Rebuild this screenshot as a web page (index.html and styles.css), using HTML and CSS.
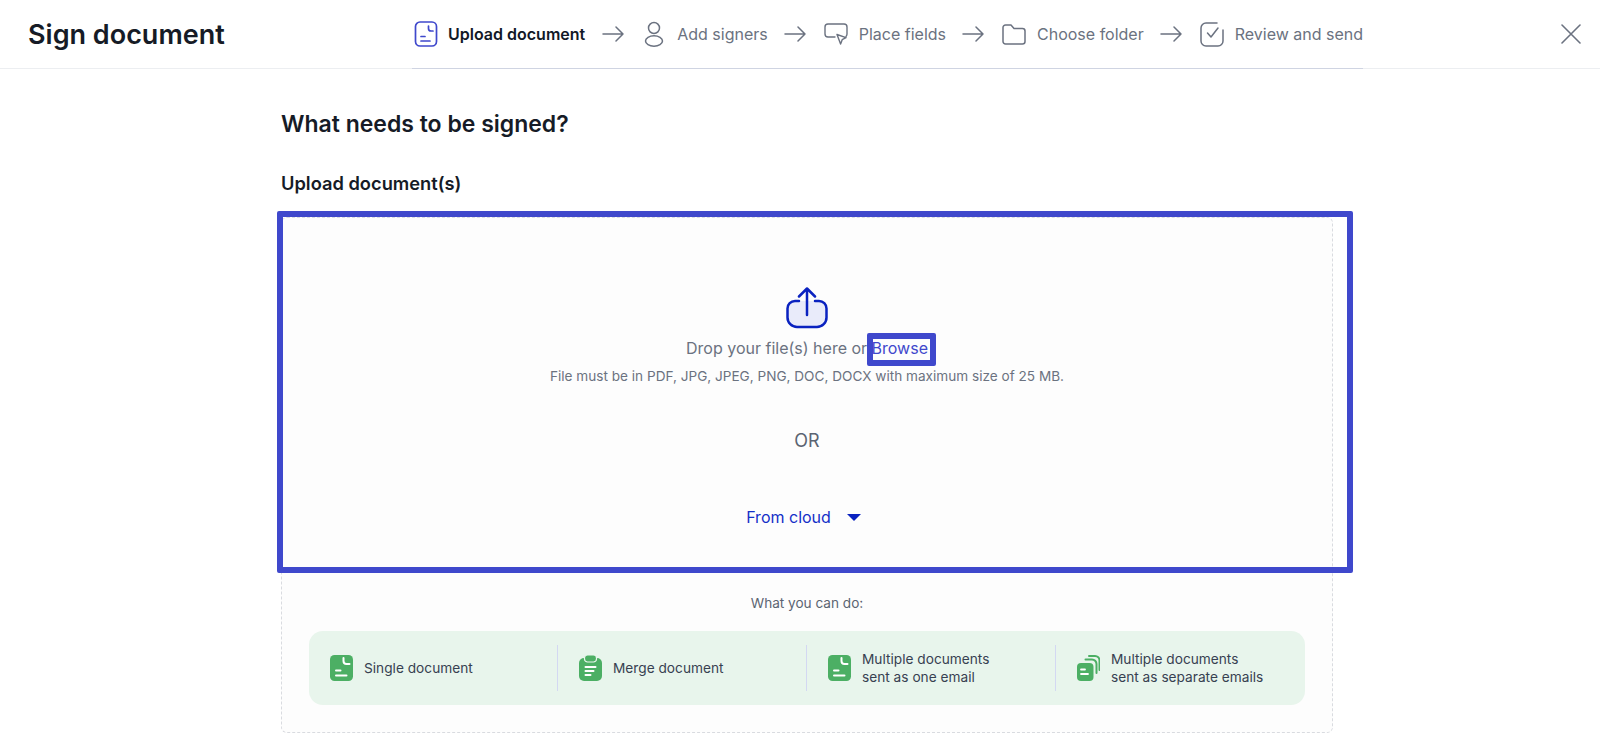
FILE: index.html
```html
<!DOCTYPE html>
<html lang="en">
<head>
  <meta charset="UTF-8" />
  <meta name="viewport" content="width=device-width, initial-scale=1.0" />
  <title>Sign document</title>
  <link rel="stylesheet" href="styles.css">
</head>
<body>

  <header class="topbar">
    <h1 class="page-title">Sign document</h1>
    <nav class="steps">
      <div class="step active">
        <svg class="step-icon" viewBox="0 0 24 28" fill="none" stroke="#3f48cc" stroke-width="1.7" stroke-linecap="round" stroke-linejoin="round">
          <rect x="1.5" y="2" width="21" height="24" rx="4.5" />
          <path d="M14.5 6v2.5a2.5 2.5 0 0 0 2.5 2.5h2" />
          <path d="M7 16.5h4M7 21h9" />
        </svg>
        <span>Upload document</span>
      </div>
      <svg class="arrow" viewBox="0 0 22 16" fill="none" stroke="#6b7280" stroke-width="1.5" stroke-linecap="round" stroke-linejoin="round"><path d="M1 8h20M14 1l7 7-7 7" /></svg>
      <div class="step">
        <svg class="step-icon" viewBox="0 0 24 28" fill="none" stroke="#6b7280" stroke-width="1.5">
          <circle cx="12" cy="8" r="5.5" />
          <ellipse cx="12" cy="21" rx="8.5" ry="5.2" />
        </svg>
        <span>Add signers</span>
      </div>
      <svg class="arrow" viewBox="0 0 22 16" fill="none" stroke="#6b7280" stroke-width="1.5" stroke-linecap="round" stroke-linejoin="round"><path d="M1 8h20M14 1l7 7-7 7" /></svg>
      <div class="step">
        <svg class="step-icon" viewBox="0 0 24 28" fill="none" stroke="#6b7280" stroke-width="1.4" stroke-linecap="round" stroke-linejoin="round">
          <path d="M11 17H4a3 3 0 0 1-3-3V7a3 3 0 0 1 3-3h16a3 3 0 0 1 3 3v7c0 1-.4 1.8-1 2.4" />
          <path d="M13 14.5l9 3.2-3.8 2-1.6 4.3z" />
        </svg>
        <span>Place fields</span>
      </div>
      <svg class="arrow" viewBox="0 0 22 16" fill="none" stroke="#6b7280" stroke-width="1.5" stroke-linecap="round" stroke-linejoin="round"><path d="M1 8h20M14 1l7 7-7 7" /></svg>
      <div class="step">
        <svg class="step-icon" viewBox="0 0 24 28" fill="none" stroke="#6b7280" stroke-width="1.5" stroke-linejoin="round">
          <path d="M1 7.5A2.5 2.5 0 0 1 3.500 5H9l3 3.500h8.500A2.500 2.500 0 0 1 23 11v10.500a2.500 2.500 0 0 1-2.500 2.500h-17A2.500 2.500 0 0 1 1 21.500z" />
        </svg>
        <span>Choose folder</span>
      </div>
      <svg class="arrow" viewBox="0 0 22 16" fill="none" stroke="#6b7280" stroke-width="1.5" stroke-linecap="round" stroke-linejoin="round"><path d="M1 8h20M14 1l7 7-7 7" /></svg>
      <div class="step">
        <svg class="step-icon" viewBox="0 0 24 28" fill="none" stroke="#6b7280" stroke-width="1.5" stroke-linecap="round" stroke-linejoin="round">
          <path d="M17 3H6a5 5 0 0 0-5 5v13a5 5 0 0 0 5 5h12a5 5 0 0 0 5-5V10" />
          <path d="M7.500 13l3.500 4 7-9" />
        </svg>
        <span>Review and send</span>
      </div>
    </nav>
    <button class="close-btn" aria-label="Close">
      <svg viewBox="0 0 20 20" fill="none" stroke="#6b7280" stroke-width="1.6" stroke-linecap="round"><path d="M1 1l18 18M19 1L1 19" /></svg>
    </button>
  </header>

  <main class="content">
    <h2 class="section-title">What needs to be signed?</h2>
    <h3 class="upload-label">Upload document(s)</h3>

    <section class="upload-panel">
      <div class="highlight-box"></div>

      <div class="dropzone">
        <svg class="upload-icon" viewBox="0 0 42 42" fill="none" stroke="#0a22c0" stroke-width="2.500" stroke-linecap="round" stroke-linejoin="round">
          <path d="M11 14h20a8 8 0 0 1 2 0 7.500 7.500 0 0 1 7.500 7.500v9a9.500 9.500 0 0 1-9.500 9.500H11a9.500 9.500 0 0 1-9.500-9.500v-9A7.500 7.500 0 0 1 9 14z" fill="#e9ebfa" stroke="none" />
          <path d="M13 14h-4a7.500 7.500 0 0 0-7.500 7.500v9A9.500 9.500 0 0 0 11 40h20a9.500 9.500 0 0 0 9.500-9.500v-9A7.500 7.500 0 0 0 33 14h-4" />
          <path d="M21 28V2M13 9.500L21 1.500l8 8" />
        </svg>
        <p class="drop-text">Drop your file(s) here or <a class="browse" href="#">Browse</a></p>
        <p class="drop-hint">File must be in PDF, JPG, JPEG, PNG, DOC, DOCX with maximum size of 25 MB.</p>
        <p class="or-text">OR</p>
        <button class="cloud-btn">From cloud <span class="caret"></span></button>
      </div>

      <p class="can-do">What you can do:</p>

      <div class="options">
        <div class="option">
          <svg class="option-icon" viewBox="0 0 23 26">
            <rect width="23" height="26" rx="4.500" fill="#4caf64" />
            <path d="M13.500 3v3a3 3 0 0 0 3 3h3M6 15.500h4.500M6 20.500h10.500" fill="none" stroke="#fff" stroke-width="2" stroke-linecap="round" />
          </svg>
          <span>Single document</span>
        </div>
        <div class="option">
          <svg class="option-icon" viewBox="0 0 23 26">
            <path d="M5 3h13a5 5 0 0 1 5 5v13a5 5 0 0 1-5 5H5a5 5 0 0 1-5-5V8a5 5 0 0 1 5-5z" fill="#4caf64" />
            <rect x="5.500" y="0" width="12" height="7" rx="3" fill="#4caf64" stroke="#e8f5ec" stroke-width="1.200" />
            <path d="M6.500 12h10M6.500 16h8M6.500 20h5" fill="none" stroke="#fff" stroke-width="2" stroke-linecap="round" />
          </svg>
          <span>Merge document</span>
        </div>
        <div class="option">
          <svg class="option-icon" viewBox="0 0 23 26">
            <rect width="23" height="26" rx="4.500" fill="#4caf64" />
            <path d="M13.500 3v3a3 3 0 0 0 3 3h3M6 15.500h4.500M6 20.500h10.500" fill="none" stroke="#fff" stroke-width="2" stroke-linecap="round" />
          </svg>
          <span>Multiple documents<br>sent as one email</span>
        </div>
        <div class="option">
          <svg class="option-icon" viewBox="0 0 23 26" fill="none">
            <path d="M12 1h6a4.500 4.500 0 0 1 4.500 4.500V15" stroke="#4caf64" stroke-width="2" stroke-linecap="round" />
            <path d="M8.500 4.500h6.500a4.500 4.500 0 0 1 4.500 4.500V18" stroke="#4caf64" stroke-width="2" stroke-linecap="round" />
            <rect x="0" y="8" width="16.500" height="18" rx="4" fill="#4caf64" />
            <path d="M4 14.500h4M4 19h7" stroke="#fff" stroke-width="1.800" stroke-linecap="round" />
          </svg>
          <span>Multiple documents<br>sent as separate emails</span>
        </div>
      </div>
    </section>
  </main>

</body>
</html>
```

FILE: styles.css
```css
* {
  box-sizing: border-box;
  margin: 0;
  padding: 0;
}

body {
  font-family: 'Inter', 'Liberation Sans', sans-serif;
  background: #fff;
  color: #111827;
}

.topbar {
  display: flex;
  align-items: center;
  height: 69px;
  padding-left: 28px;
  border-bottom: 1px solid #eceef1;
}

.page-title {
  width: 384px;
  font-size: 27px;
  font-weight: 600;
  color: #161b26;
}

.steps {
  display: flex;
  align-items: center;
  gap: 17px;
  width: 951px;
  height: 69px;
  padding-left: 2px;
  border-bottom: 1px solid #cfd4e2;
}

.step {
  display: flex;
  align-items: center;
  gap: 11px;
  font-size: 16px;
  color: #6b7280;
  white-space: nowrap;
}

.step.active {
  gap: 10px;
  margin-right: 1px;
  font-weight: 600;
  color: #111827;
}

.step-icon {
  width: 24px;
  height: 28px;
  flex: none;
}

.arrow {
  width: 22px;
  height: 16px;
  margin: 0 1px 0 -1px;
  flex: none;
}

.close-btn {
  width: 20px;
  height: 20px;
  margin-left: 198px;
  background: none;
  border: none;
  cursor: pointer;
}

.close-btn svg {
  display: block;
}

.content {
  width: 1052px;
  margin-left: 281px;
  padding-bottom: 3px;
}

.section-title {
  margin-top: 40px;
  font-size: 23px;
  line-height: 30px;
  font-weight: 600;
  color: #161b26;
}

.upload-label {
  margin-top: 32px;
  font-size: 18.300px;
  line-height: 24px;
  font-weight: 600;
  color: #161b26;
}

.upload-panel {
  position: relative;
  margin-top: 22px;
  padding: 0 27px 27px;
  background: #fdfdfd;
  border: 1px dashed #d9dbe0;
  border-radius: 6px;
}

/* blue annotation frame drawn over the panel */
.highlight-box {
  position: absolute;
  top: -7px;
  left: -5px;
  right: -21px;
  height: 362px;
  border: 6px solid #3f48cc;
  border-radius: 2px;
  pointer-events: none;
}

.dropzone {
  display: flex;
  flex-direction: column;
  align-items: center;
  padding-top: 69px;
  padding-bottom: 38px;
  border-bottom: 1px solid #d6d6d6;
}

.upload-icon {
  width: 42px;
  height: 42px;
}

.drop-text {
  margin-top: 7px;
  font-size: 16px;
  line-height: 24px;
  color: #6b7280;
}

.browse {
  position: relative;
  color: #3f48cc;
  text-decoration: none;
}

/* same annotation frame, round the link */
.browse::after {
  content: "";
  position: absolute;
  top: -5px;
  bottom: -8px;
  left: -5px;
  right: -8px;
  border: 6px solid #3f48cc;
  border-radius: 2px;
}

.drop-hint {
  margin-top: 6px;
  font-size: 13.600px;
  line-height: 20px;
  color: #6b7280;
}

.or-text {
  margin-top: 43px;
  font-size: 18px;
  line-height: 24px;
  color: #5b6472;
}

.cloud-btn {
  display: flex;
  align-items: center;
  gap: 16px;
  margin-top: 52px;
  margin-right: 7px;
  font-family: inherit;
  font-size: 16px;
  line-height: 24px;
  color: #1430c8;
  background: none;
  border: none;
}

.caret {
  width: 0;
  height: 0;
  border-left: 7px solid transparent;
  border-right: 7px solid transparent;
  border-top: 7px solid #0a22c0;
}

.can-do {
  margin-top: 25px;
  font-size: 13.600px;
  line-height: 20px;
  text-align: center;
  color: #5b6472;
}

.options {
  display: grid;
  grid-template-columns: 248px repeat(2, 249px) 1fr;
  height: 74px;
  margin-top: 18px;
  padding: 14px 0;
  background: #e8f5ec;
  border-radius: 14px;
}

.option {
  display: flex;
  align-items: center;
  gap: 11px;
  padding-left: 21px;
  font-size: 13.700px;
  line-height: 18.500px;
  color: #374151;
  border-left: 1px solid #d3d8f2;
}

.option:first-child {
  border-left: none;
}

.option-icon {
  width: 23px;
  height: 26px;
  flex: none;
}
```
